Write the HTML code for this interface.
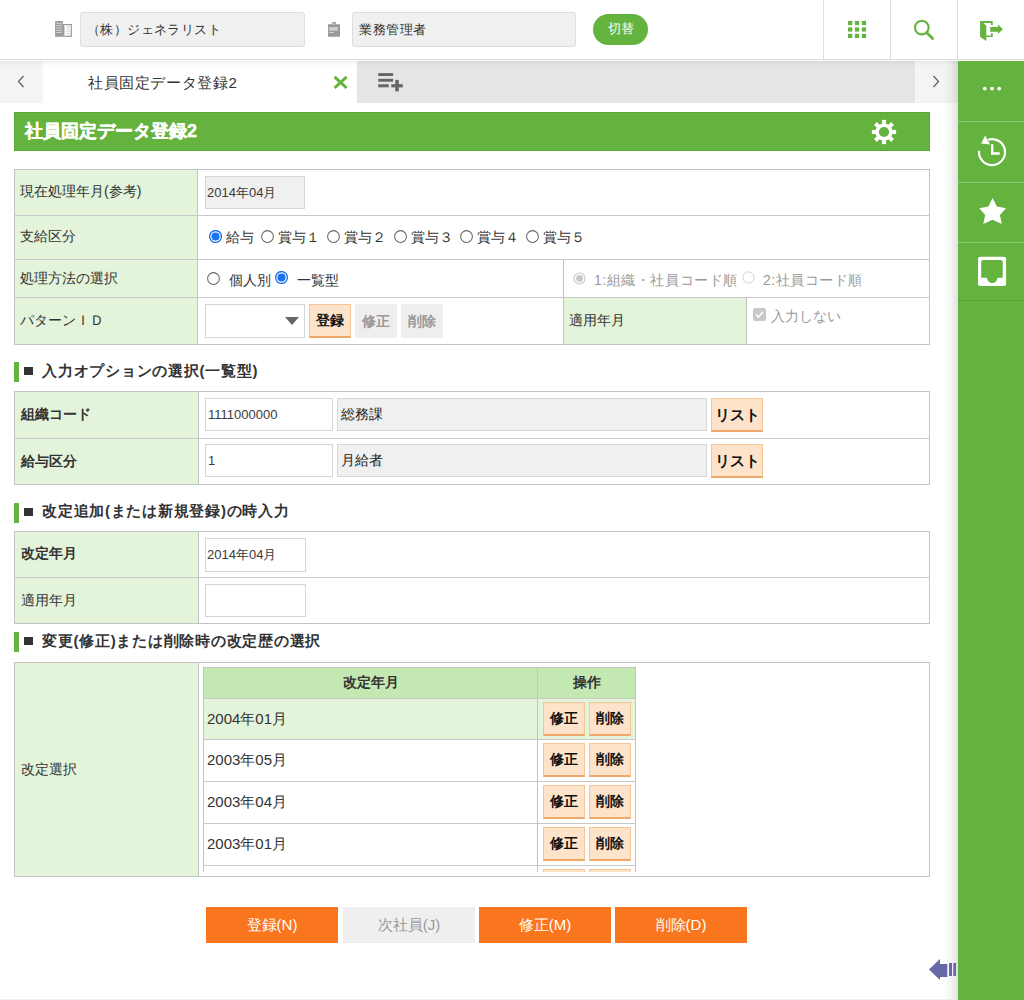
<!DOCTYPE html>
<html><head><meta charset="utf-8">
<style>
*{box-sizing:border-box;margin:0;padding:0}
html,body{width:1024px;height:1000px;overflow:hidden;background:#fff}
body{position:relative;font-family:"Liberation Sans",sans-serif;font-size:14px;color:#333}
.a{position:absolute}
.g{background:#64b33e}
.vl{position:absolute;width:1px;background:#ddd}
.hl{position:absolute;height:1px;background:#c8c8c8}
.box{position:absolute;border:1px solid #ddd;background:#f0f0f0;border-radius:3px}
.t{position:absolute;white-space:nowrap;line-height:1}
.lbl{position:absolute;background:#e3f4da}
.inp{position:absolute;border:1px solid #d6d6d6;background:#fff}
.inpg{position:absolute;border:1px solid #d6d6d6;background:#f0f0f0}
.pb{position:absolute;background:#fde3c9;border:1px solid #f5c596;border-bottom:2px solid #f0a86a;font-weight:bold;color:#111;text-align:center}
.gb{position:absolute;background:#eeeeee;font-weight:bold;color:#999;text-align:center}
.ob{position:absolute;background:#fa761e;color:#fff;text-align:center;font-size:15px;line-height:36px;height:36px;width:132px;top:907px}
.sh{position:absolute;left:14px;width:5px;height:20px;background:#64b33e}
.sq{position:absolute;left:24px;width:9px;height:8px;background:#333}
.st{position:absolute;left:42px;font-weight:bold;font-size:15px;letter-spacing:0.75px;color:#333;white-space:nowrap;line-height:1}
</style></head><body>

<!-- header -->
<div class="hl" style="left:0;top:59px;width:1024px;background:#dcdcdc"></div>
<div class="vl" style="left:823px;top:0;height:59px"></div>
<div class="vl" style="left:890px;top:0;height:59px"></div>
<div class="vl" style="left:957px;top:0;height:59px"></div>

<!-- building icon -->
<svg class="a" style="left:40px;top:10px" width="60" height="40" viewBox="0 0 60 40">
<rect x="15.1" y="11" width="7.8" height="15.8" fill="#999"/>
<path d="M16.2 13.3h5.6M16.2 15.6h5.6M16.2 17.9h5.6M16.2 20.2h5.6M16.2 22.4h5.6" stroke="#ddd" stroke-width="0.9"/>
<rect x="22.9" y="14" width="9" height="12.8" fill="#999"/>
<rect x="24.1" y="15.2" width="6.6" height="10.4" fill="#fff"/>
<path d="M24.6 16.8v7.5M26.8 16.8h3M26.8 19h3M26.8 21.2h3M26.8 23.4h3" stroke="#bbb" stroke-width="0.8"/>
</svg>
<div class="box" style="left:80px;top:12px;width:225px;height:35px"></div>
<div class="t" style="left:87px;top:23px;font-size:13px;letter-spacing:0.4px;color:#333">（株）ジェネラリスト</div>

<!-- clipboard -->
<svg class="a" style="left:315px;top:10px" width="60" height="40" viewBox="0 0 60 40">
<path d="M13 14.2h3.6a2.4 2.4 0 0 1 4.8 0h3.6v12.5h-12z" fill="#999"/>
<circle cx="18.9" cy="14" r="0.9" fill="#ddd"/>
<rect x="14.1" y="17" width="8.8" height="3.8" fill="#ccc"/>
<rect x="14.1" y="22" width="4.7" height="0.9" fill="#ddd"/>
</svg>
<div class="box" style="left:352px;top:12px;width:224px;height:35px"></div>
<div class="t" style="left:359px;top:23px;font-size:13px;letter-spacing:0.6px;color:#333">業務管理者</div>

<div class="a g" style="left:593px;top:14px;width:55px;height:31px;border-radius:16px"></div>
<div class="t" style="left:593px;top:22px;width:55px;text-align:center;color:#fff;font-size:13px">切替</div>

<!-- grid icon -->
<svg class="a" style="left:848px;top:20px" width="19" height="19" viewBox="0 0 19 19"><g fill="#64b33e"><rect x="0" y="0.9" width="4.3" height="4.2"/><rect x="6.9" y="0.9" width="4.3" height="4.2"/><rect x="13.8" y="0.9" width="4.3" height="4.2"/><rect x="0" y="7.4" width="4.3" height="4.2"/><rect x="6.9" y="7.4" width="4.3" height="4.2"/><rect x="13.8" y="7.4" width="4.3" height="4.2"/><rect x="0" y="13.8" width="4.3" height="4.2"/><rect x="6.9" y="13.8" width="4.3" height="4.2"/><rect x="13.8" y="13.8" width="4.3" height="4.2"/></g></svg>
<!-- search -->
<svg class="a" style="left:900px;top:10px" width="44" height="40" viewBox="0 0 44 40">
<circle cx="21.8" cy="17.6" r="6.8" fill="none" stroke="#64b33e" stroke-width="2.1"/>
<path d="M26.6 22.4L32.6 28.4" stroke="#64b33e" stroke-width="2.8" stroke-linecap="round"/>
</svg>
<!-- exit -->
<svg class="a" style="left:970px;top:10px" width="44" height="40" viewBox="0 0 44 40">
<path d="M10.1 11H22.8V15H21V13H13.3L16.3 15.8V25.4H21V23.2H22.8V27H16.3V31L10.1 27Z" fill="#64b33e"/>
<path d="M20.2 17H27.9V14.4L32.9 19.2 27.9 23.9V21.7H20.2Z" fill="#64b33e"/>
</svg>

<!-- tab bar -->
<div class="a" style="left:0;top:60px;width:958px;height:43px;background:#fafafa"></div>
<div class="a" style="left:0;top:61px;width:43px;height:42px;background:#f4f4f4"></div>
<svg class="a" style="left:17px;top:75px" width="8" height="13" viewBox="0 0 8 13"><path d="M6.5 1L1.5 6.5 6.5 12" fill="none" stroke="#666" stroke-width="1.3"/></svg>
<div class="a" style="left:43px;top:61px;width:314px;height:42px;background:#fff"></div>
<div class="t" style="left:88px;top:75px;font-size:15px;color:#333;letter-spacing:0.6px">社員固定データ登録2</div>

<div class="a" style="left:357px;top:61px;width:558px;height:42px;background:#e5e5e5"></div>
<svg class="a" style="left:325px;top:65px" width="90" height="35" viewBox="0 0 90 35">
<path d="M9.6 11.9L21.6 23M21.6 11.9L9.6 23" stroke="#64b33e" stroke-width="3"/>
<g fill="#666"><rect x="53.2" y="8.1" width="14.9" height="2.9"/><rect x="53.2" y="13.8" width="14.9" height="2.9"/><rect x="53.2" y="19.3" width="10.5" height="3"/>
<rect x="70.3" y="14.9" width="3.5" height="11.5"/><rect x="66.3" y="19.2" width="11.5" height="3.2"/></g></svg>

<div class="a" style="left:915px;top:61px;width:43px;height:42px;background:#f4f4f4"></div>
<div class="a" style="left:0;top:61px;width:958px;height:5px;background:linear-gradient(rgba(0,0,0,0.05),rgba(0,0,0,0))"></div>

<svg class="a" style="left:932px;top:75px" width="8" height="13" viewBox="0 0 8 13"><path d="M1.5 1L6.5 6.5 1.5 12" fill="none" stroke="#666" stroke-width="1.3"/></svg>

<!-- sidebar -->
<div class="a" style="left:942px;top:61px;width:16px;height:939px;background:linear-gradient(to right,rgba(0,0,0,0),rgba(0,0,0,0.03) 50%,rgba(0,0,0,0.12))"></div>
<div class="a g" style="left:958px;top:61px;width:66px;height:939px"></div>
<div class="a" style="left:958px;top:121px;width:66px;height:1px;background:#8fc872"></div>
<div class="a" style="left:958px;top:182px;width:66px;height:1px;background:#8fc872"></div>
<div class="a" style="left:958px;top:242px;width:66px;height:1px;background:#8fc872"></div>
<div class="a" style="left:958px;top:300px;width:66px;height:1px;background:#56a033"></div>
<svg class="a" style="left:980px;top:84px" width="24" height="9" viewBox="0 0 24 9"><g fill="#fff"><circle cx="4.8" cy="4.6" r="1.9"/><circle cx="12" cy="4.6" r="1.9"/><circle cx="19.2" cy="4.6" r="1.9"/></g></svg>
<svg class="a" style="left:970px;top:130px" width="44" height="40" viewBox="0 0 44 40">
<path d="M9.1 20.8A13 13 0 1 0 18.2 9.7" fill="none" stroke="#fff" stroke-width="2.2"/>
<path d="M15.2 5.6L11.2 13.6 20.2 14.4z" fill="#fff"/>
<path d="M22.2 14.2V23.5H29.7" fill="none" stroke="#fff" stroke-width="2.4"/>
</svg>
<svg class="a" style="left:970px;top:190px" width="44" height="40" viewBox="0 0 44 40">
<path d="M22.56 7.95L26.9 16.6 36.1 18.26 29.9 25 31.8 33.95 22.56 29.8 13.3 33.95 15.2 25 9.24 18.26 18.3 16.6Z" fill="#fff"/>
</svg>
<svg class="a" style="left:970px;top:250px" width="44" height="40" viewBox="0 0 44 40">
<path d="M10.5 6.7H33.6A2.5 2.5 0 0 1 36.1 9.2V33.6A2.5 2.5 0 0 1 33.6 36.1H10.5A2.5 2.5 0 0 1 8 33.6V9.2A2.5 2.5 0 0 1 10.5 6.7Z M13.2 10.1A2 2 0 0 0 11.2 12.1V27.7H17A5.2 5.2 0 0 0 27.4 27.7H32.7V12.1A2 2 0 0 0 30.7 10.1Z" fill="#fff" fill-rule="evenodd"/>
</svg>

<!-- title bar -->
<div class="a g" style="left:14px;top:112px;width:916px;height:39px;border:1px solid #5ba737"></div>
<div class="t" style="left:25px;top:122px;font-size:18px;font-weight:bold;color:#fff;-webkit-text-stroke:0.4px #fff">社員固定データ登録2</div>
<svg class="a" style="left:862px;top:112px" width="44" height="40" viewBox="0 0 44 40">
<g fill="#fff" transform="translate(22 20)">
<rect x="-2.05" y="-12.1" width="4.1" height="24.2"/><rect x="-2.05" y="-12.1" width="4.1" height="24.2" transform="rotate(45)"/>
<rect x="-2.05" y="-12.1" width="4.1" height="24.2" transform="rotate(90)"/><rect x="-2.05" y="-12.1" width="4.1" height="24.2" transform="rotate(135)"/>
<circle r="8.6"/></g>
<circle cx="22" cy="20" r="5.1" fill="#64b33e"/>
</svg>

<!-- table 1 -->
<div class="lbl" style="left:14px;top:169px;width:184px;height:175px"></div>
<div class="lbl" style="left:563px;top:297px;width:184px;height:47px"></div>
<div class="a" style="left:14px;top:169px;width:916px;height:176px;border:1px solid #c3c3c3"></div>
<div class="hl" style="left:14px;top:215px;width:916px"></div>
<div class="hl" style="left:14px;top:259px;width:916px"></div>
<div class="hl" style="left:14px;top:297px;width:916px"></div>
<div class="vl" style="left:197px;top:169px;height:176px;background:#c3c3c3"></div>
<div class="vl" style="left:563px;top:259px;height:86px;background:#c3c3c3"></div>
<div class="vl" style="left:746px;top:297px;height:48px;background:#c3c3c3"></div>

<div class="t" style="left:20px;top:184px">現在処理年月(参考)</div>
<div class="t" style="left:20px;top:229px">支給区分</div>
<div class="t" style="left:20px;top:271px">処理方法の選択</div>
<div class="t" style="left:20px;top:313px">パターンＩＤ</div>

<div class="inpg" style="left:205px;top:176px;width:100px;height:33px"></div>
<div class="t" style="left:207px;top:186px;font-size:13px;color:#3a3a3a;">2014年04月</div>

<svg class="a" style="left:209.0px;top:230.0px" width="13" height="13" viewBox="0 0 13 13"><circle cx="6.5" cy="6.5" r="5.9" fill="#fff" stroke="#1a6fe8" stroke-width="1.3"/><circle cx="6.5" cy="6.5" r="4.1" fill="#1a73f0"/></svg>
<div class="t" style="left:226px;top:230px">給与</div>
<svg class="a" style="left:260.9px;top:230.0px" width="13" height="13" viewBox="0 0 13 13"><circle cx="6.5" cy="6.5" r="5.9" fill="#fff" stroke="#666" stroke-width="1.05"/></svg>
<div class="t" style="left:278px;top:230px">賞与１</div>
<svg class="a" style="left:326.8px;top:230.0px" width="13" height="13" viewBox="0 0 13 13"><circle cx="6.5" cy="6.5" r="5.9" fill="#fff" stroke="#666" stroke-width="1.05"/></svg>
<div class="t" style="left:344px;top:230px">賞与２</div>
<svg class="a" style="left:393.5px;top:230.0px" width="13" height="13" viewBox="0 0 13 13"><circle cx="6.5" cy="6.5" r="5.9" fill="#fff" stroke="#666" stroke-width="1.05"/></svg>
<div class="t" style="left:411px;top:230px">賞与３</div>
<svg class="a" style="left:459.5px;top:230.0px" width="13" height="13" viewBox="0 0 13 13"><circle cx="6.5" cy="6.5" r="5.9" fill="#fff" stroke="#666" stroke-width="1.05"/></svg>
<div class="t" style="left:477px;top:230px">賞与４</div>
<svg class="a" style="left:525.5px;top:230.0px" width="13" height="13" viewBox="0 0 13 13"><circle cx="6.5" cy="6.5" r="5.9" fill="#fff" stroke="#666" stroke-width="1.05"/></svg>
<div class="t" style="left:543px;top:230px">賞与５</div>
<svg class="a" style="left:207.1px;top:271.5px" width="13" height="13" viewBox="0 0 13 13"><circle cx="6.5" cy="6.5" r="5.9" fill="#fff" stroke="#666" stroke-width="1.05"/></svg>
<div class="t" style="left:229px;top:273px">個人別</div>
<svg class="a" style="left:275.0px;top:270.8px" width="13" height="13" viewBox="0 0 13 13"><circle cx="6.5" cy="6.5" r="5.9" fill="#fff" stroke="#1a6fe8" stroke-width="1.3"/><circle cx="6.5" cy="6.5" r="4.1" fill="#1a73f0"/></svg>
<div class="t" style="left:297px;top:273px">一覧型</div>
<svg class="a" style="left:572.5px;top:271.5px" width="13" height="13" viewBox="0 0 13 13"><circle cx="6.5" cy="6.5" r="5.5" fill="#fff" stroke="#c8c8c8" stroke-width="1.2"/><circle cx="6.5" cy="6.5" r="3.4" fill="#c8c8c8"/></svg>
<div class="t" style="left:594px;top:273px;color:#999;letter-spacing:0.55px">1:組織・社員コード順</div>
<svg class="a" style="left:741.5px;top:270.5px" width="13" height="13" viewBox="0 0 13 13"><circle cx="6.5" cy="6.5" r="5.6" fill="#fff" stroke="#cfcfcf" stroke-width="1"/></svg>
<div class="t" style="left:763px;top:273px;color:#999;letter-spacing:0.5px">2:社員コード順</div>
<!-- row 4 -->
<div class="inp" style="left:205px;top:304px;width:100px;height:34px"></div>
<svg class="a" style="left:285px;top:317px" width="14" height="8" viewBox="0 0 14 8"><path d="M0 0h14L7 8z" fill="#666"/></svg>
<div class="pb" style="left:309px;top:304px;width:42px;height:34px;line-height:31px;font-size:14px">登録</div>
<div class="gb" style="left:355px;top:304px;width:42px;height:34px;line-height:34px;font-size:14px">修正</div>
<div class="gb" style="left:401px;top:304px;width:42px;height:34px;line-height:34px;font-size:14px">削除</div>
<div class="t" style="left:569px;top:313px">適用年月</div>
<svg class="a" style="left:753px;top:308px" width="13" height="13" viewBox="0 0 13 13"><rect x="0" y="0" width="13" height="13" rx="2" fill="#c8c8c8"/><path d="M3 6.5l2.5 2.5 4.5-5" fill="none" stroke="#fff" stroke-width="1.6"/></svg>
<div class="t" style="left:771px;top:309px;color:#999">入力しない</div>

<!-- section 2 -->
<div class="sh" style="top:362px"></div><div class="sq" style="top:367px"></div>
<div class="st" style="top:363px">入力オプションの選択(一覧型)</div>
<div class="lbl" style="left:14px;top:391px;width:184px;height:93px"></div>
<div class="a" style="left:14px;top:391px;width:916px;height:94px;border:1px solid #c3c3c3"></div>
<div class="hl" style="left:14px;top:438px;width:916px"></div>
<div class="vl" style="left:198px;top:391px;height:94px;background:#c3c3c3"></div>
<div class="t" style="left:21px;top:407px;font-weight:bold">組織コード</div>
<div class="t" style="left:21px;top:454px;font-weight:bold">給与区分</div>
<div class="inp" style="left:205px;top:398px;width:128px;height:33px"></div>
<div class="t" style="left:208px;top:408px;font-size:13px;color:#3a3a3a;">1111000000</div>
<div class="inpg" style="left:337px;top:398px;width:370px;height:33px"></div>
<div class="t" style="left:341px;top:407px;color:#222">総務課</div>
<div class="pb" style="left:711px;top:398px;width:52px;height:34px;line-height:32px;font-size:15px">リスト</div>
<div class="inp" style="left:205px;top:444px;width:128px;height:33px"></div>
<div class="t" style="left:208px;top:454px;font-size:13px;color:#3a3a3a">1</div>
<div class="inpg" style="left:337px;top:444px;width:370px;height:33px"></div>
<div class="t" style="left:341px;top:453px;color:#222">月給者</div>
<div class="pb" style="left:711px;top:444px;width:52px;height:34px;line-height:32px;font-size:15px">リスト</div>

<!-- section 3 -->
<div class="sh" style="top:503px"></div><div class="sq" style="top:508px"></div>
<div class="st" style="top:503px">改定追加(または新規登録)の時入力</div>
<div class="lbl" style="left:14px;top:531px;width:184px;height:92px"></div>
<div class="a" style="left:14px;top:531px;width:916px;height:93px;border:1px solid #c3c3c3"></div>
<div class="hl" style="left:14px;top:577px;width:916px"></div>
<div class="vl" style="left:198px;top:531px;height:93px;background:#c3c3c3"></div>
<div class="t" style="left:21px;top:546px;font-weight:bold">改定年月</div>
<div class="t" style="left:21px;top:593px">適用年月</div>
<div class="inp" style="left:205px;top:538px;width:101px;height:34px"></div>
<div class="t" style="left:207px;top:548px;font-size:13px;color:#3a3a3a;">2014年04月</div>
<div class="inp" style="left:205px;top:584px;width:101px;height:33px"></div>

<!-- section 4 -->
<div class="sh" style="top:632px"></div><div class="sq" style="top:637px"></div>
<div class="st" style="top:633px">変更(修正)または削除時の改定歴の選択</div>
<div class="lbl" style="left:14px;top:662px;width:184px;height:214px"></div>
<div class="a" style="left:14px;top:662px;width:916px;height:215px;border:1px solid #c3c3c3"></div>
<div class="vl" style="left:198px;top:662px;height:215px;background:#c3c3c3"></div>
<div class="t" style="left:21px;top:762px">改定選択</div>

<div class="a" style="left:203px;top:667px;width:433px;height:32px;background:#c4e8b2"></div>
<div class="a" style="left:203px;top:698px;width:433px;height:42px;background:#e3f4da"></div>
<div class="a" style="left:203px;top:667px;width:433px;height:205px;border:1px solid #c3c3c3;border-bottom:none"></div>
<div class="hl" style="left:203px;top:698px;width:433px"></div>
<div class="hl" style="left:203px;top:739px;width:433px"></div>
<div class="hl" style="left:203px;top:781px;width:433px"></div>
<div class="hl" style="left:203px;top:823px;width:433px"></div>
<div class="hl" style="left:203px;top:865px;width:433px"></div>
<div class="vl" style="left:537px;top:667px;height:205px;background:#c3c3c3"></div>
<div class="t" style="left:204px;top:675px;width:333px;text-align:center;font-weight:bold">改定年月</div>
<div class="t" style="left:538px;top:675px;width:97px;text-align:center;font-weight:bold">操作</div>
<div class="t" style="left:207px;top:711px;font-size:15px">2004年01月</div>
<div class="pb" style="left:543px;top:702px;width:42px;height:34px;line-height:31px">修正</div>
<div class="pb" style="left:589px;top:702px;width:42px;height:34px;line-height:31px">削除</div>
<div class="t" style="left:207px;top:752px;font-size:15px">2003年05月</div>
<div class="pb" style="left:543px;top:743px;width:42px;height:34px;line-height:31px">修正</div>
<div class="pb" style="left:589px;top:743px;width:42px;height:34px;line-height:31px">削除</div>
<div class="t" style="left:207px;top:794px;font-size:15px">2003年04月</div>
<div class="pb" style="left:543px;top:785px;width:42px;height:34px;line-height:31px">修正</div>
<div class="pb" style="left:589px;top:785px;width:42px;height:34px;line-height:31px">削除</div>
<div class="t" style="left:207px;top:836px;font-size:15px">2003年01月</div>
<div class="pb" style="left:543px;top:827px;width:42px;height:34px;line-height:31px">修正</div>
<div class="pb" style="left:589px;top:827px;width:42px;height:34px;line-height:31px">削除</div>
<div class="a" style="left:204px;top:866px;width:431px;height:6px;overflow:hidden"><div class="pb" style="left:339px;top:3px;width:42px;height:34px"></div><div class="pb" style="left:385px;top:3px;width:42px;height:34px"></div></div>

<!-- bottom buttons -->
<div class="ob" style="left:206px">登録(N)</div>
<div class="ob" style="left:343px;background:#efefef;color:#999">次社員(J)</div>
<div class="ob" style="left:479px">修正(M)</div>
<div class="ob" style="left:615px">削除(D)</div>
<svg class="a" style="left:928px;top:958px" width="29" height="23" viewBox="0 0 29 23">
<path d="M1 11.5L12 1v4.9h7.3v13H12V22z" fill="#6868a8"/>
<rect x="21" y="5" width="3" height="13" fill="#6868a8"/><rect x="25.3" y="5" width="2.7" height="13" fill="#6868a8"/>
</svg>
<div class="a" style="left:0;top:999px;width:958px;height:1px;background:#eee"></div>
</body></html>
